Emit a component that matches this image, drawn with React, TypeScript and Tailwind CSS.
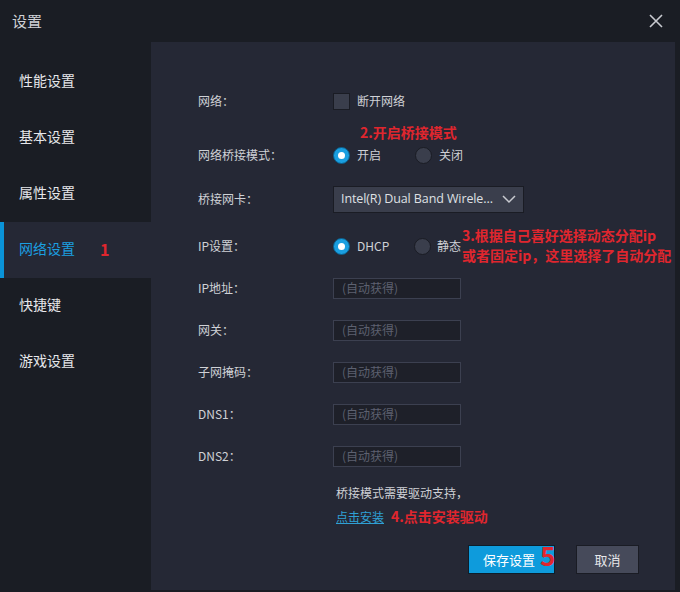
import React from 'react';

const font = { fontFamily: '"Microsoft YaHei", "Noto Sans CJK SC", "Noto Sans", sans-serif' };

const navItems = ['性能设置', '基本设置', '属性设置', '网络设置', '快捷键', '游戏设置'];

const Radio = ({ checked }: { checked: boolean }) =>
  checked ? (
    <span className="flex h-[17px] w-[17px] items-center justify-center rounded-full border border-[#0b5f8c] bg-[#1a9fe0]">
      <span className="h-[7px] w-[7px] rounded-full bg-white" />
    </span>
  ) : (
    <span className="h-[17px] w-[17px] rounded-full border border-[#1a1c24] bg-[#3a3e4c]" />
  );

const Field = ({ label }: { label: string }) => (
  <div className="mt-[14px] flex h-[28px] items-center">
    <span className="w-[135px] text-[12px] text-[#cfd1d6]">{label}</span>
    <div className="flex h-[21px] w-[128px] items-center border border-[#3c4050] bg-[#1e2029] pl-[8px] text-[12px] text-[#5d6170]">
      (自动获得)
    </div>
  </div>
);

export default function App() {
  return (
    <div className="flex h-[592px] w-[680px] flex-col bg-[#1a1d24]" style={font}>
      <div className="flex h-[42px] shrink-0 items-center justify-between px-[12px]">
        <span className="text-[15px] text-[#cfd1d6]">设置</span>
        <svg width="16" height="16" viewBox="0 0 16 16" className="mr-[4px]">
          <path d="M2 2 L14 14 M14 2 L2 14" stroke="#c8cad0" strokeWidth="1.6" />
        </svg>
      </div>
      <div className="flex flex-1">
        <nav className="w-[151px] shrink-0 pt-[12px]">
          {navItems.map((item, i) => {
            const active = i === 3;
            return (
              <div
                key={item}
                className={
                  active
                    ? 'flex h-[56px] items-center border-l-4 border-[#0a93d8] bg-[#252835] pb-[3px] pl-[15px] text-[14px] text-[#1b9fe0]'
                    : 'flex h-[56px] items-center pb-[3px] pl-[19px] text-[14px] text-[#e6e7ea]'
                }
              >
                {item}
                {active && <span className="ml-[25px] text-[16px] font-bold text-[#e0262e]">1</span>}
              </div>
            );
          })}
        </nav>
        <div className="relative mb-[2px] mr-[5px] flex flex-1 flex-col bg-[#252835] pl-[47px] pr-[36px] pt-[45px]">
          <div className="flex h-[28px] items-center">
            <span className="w-[135px] text-[12px] text-[#cfd1d6]">网络：</span>
            <span className="h-[17px] w-[17px] border border-[#1a1c24] bg-[#3a3e4c]" />
            <span className="ml-[7px] text-[12px] text-[#cfd1d6]">断开网络</span>
          </div>
          <div className="mt-[26px] flex h-[28px] items-center">
            <span className="w-[135px] text-[12px] text-[#cfd1d6]">网络桥接模式：</span>
            <Radio checked />
            <span className="ml-[7px] w-[58px] text-[12px] text-[#cfd1d6]">开启</span>
            <Radio checked={false} />
            <span className="ml-[7px] text-[12px] text-[#cfd1d6]">关闭</span>
          </div>
          <div className="mt-[16px] flex h-[28px] items-center">
            <span className="w-[135px] text-[12px] text-[#cfd1d6]">桥接网卡：</span>
            <div className="flex h-[27px] w-[191px] items-center justify-between border border-[#1a1c24] bg-[#3a3e4c] pl-[7px] pr-[6px] text-[#dfe0e4]">
              <span className="overflow-hidden whitespace-nowrap text-[12.5px] tracking-[-0.1px]" style={{ fontFamily: '"Open Sans", "Noto Sans", sans-serif' }}>
                Intel(R) Dual Band Wirele...
              </span>
              <svg width="16" height="16" viewBox="0 0 16 16" className="shrink-0">
                <path d="M2 5 L8 11 L14 5" fill="none" stroke="#c8cad0" strokeWidth="1.5" />
              </svg>
            </div>
          </div>
          <div className="mt-[19px] flex h-[28px] items-center">
            <span className="w-[135px] text-[12px] text-[#cfd1d6]">IP设置：</span>
            <Radio checked />
            <span className="ml-[7px] w-[57px] text-[12px] text-[#cfd1d6]">DHCP</span>
            <Radio checked={false} />
            <span className="ml-[6px] text-[12px] text-[#cfd1d6]">静态</span>
          </div>
          <Field label="IP地址：" />
          <Field label="网关：" />
          <Field label="子网掩码：" />
          <Field label="DNS1：" />
          <Field label="DNS2：" />
          <div className="ml-[138px] mt-[14px] text-[12px] text-[#cfd1d6]">桥接模式需要驱动支持，</div>
          <div className="ml-[138px] mt-[4px] flex items-center">
            <span className="text-[12px] text-[#2fa0d4] underline">点击安装</span>
            <span className="ml-[7px] text-[14px] font-bold text-[#e0262e]">4.点击安装驱动</span>
          </div>
          <div className="mt-[18px] flex justify-end gap-[21px]">
            <button className="h-[29px] w-[87px] border border-[#0d1e2a] bg-[#0e9bdc] pr-[5px] text-[13px] text-white">
              保存设置
            </button>
            <button className="h-[29px] w-[63px] border border-[#1a1c24] bg-[#464a5a] text-[13px] text-[#e6e7ea]">
              取消
            </button>
          </div>
          <span className="absolute left-[209px] top-[80px] text-[14px] font-bold text-[#e0262e]">2.开启桥接模式</span>
          <div className="absolute left-[311px] top-[183px] text-[14px] font-bold leading-[20px] text-[#e0262e]">
            <div>3.根据自己喜好选择动态分配ip</div>
            <div>或者固定ip，这里选择了自动分配</div>
          </div>
          <span className="absolute left-[389px] top-[498px] text-[26px] font-bold leading-[30px] text-[#e0262e]">5</span>
        </div>
      </div>
    </div>
  );
}
